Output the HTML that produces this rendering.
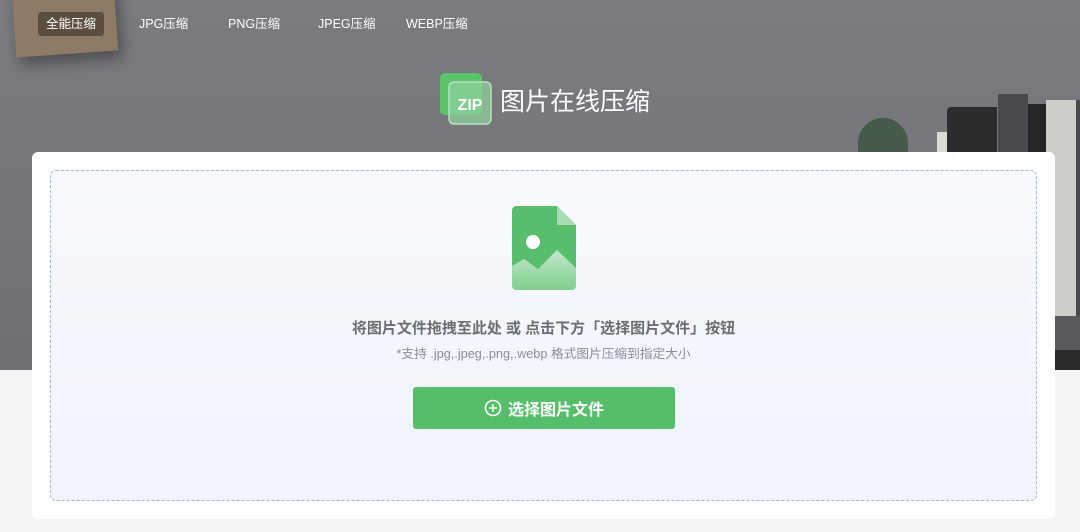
<!DOCTYPE html>
<html><head><meta charset="utf-8"><style>
*{margin:0;padding:0;box-sizing:border-box}
body{width:1080px;height:532px;overflow:hidden;background:#f3f4f6;font-family:"Liberation Sans","Noto Sans CJK SC",sans-serif;position:relative}
.hero{position:absolute;left:0;top:0;width:1080px;height:370px;background:linear-gradient(180deg,#7a7b80 0%,#74757a 60%,#6e6f73 100%);overflow:hidden}
.note{position:absolute;left:14px;top:-14px;width:102px;height:68px;background:#8e7b66;transform:rotate(-4deg);box-shadow:4px 8px 14px rgba(0,0,0,.35)}
.nav{position:absolute;top:12px;left:0;font-size:13px;color:#fff}
.nav span{position:absolute;height:24px;line-height:24px;white-space:nowrap;font-size:12.5px}
.nav span.on{background:rgba(70,60,50,.7);border-radius:3px;padding:0 8px}
.title{position:absolute;left:440px;top:73px;display:flex;align-items:center;color:#fff;font-size:25px}
.card{position:absolute;left:32px;top:152px;width:1023px;height:367px;background:#fff;border-radius:6px}
.drop{position:absolute;left:18px;top:18px;width:987px;height:331px;border:1px dashed #aab4e0;border-radius:6px;background:linear-gradient(180deg,#f8faff,#f1f4fb)}
.t1{position:absolute;top:146px;width:100%;text-align:center;font-size:15px;font-weight:bold;color:#6b6d72}
.t2{position:absolute;top:172px;width:100%;text-align:center;font-size:12.7px;color:#8a8d93}
.btn{position:absolute;left:362px;top:216px;width:262px;height:42px;background:#56bd6b;border-radius:3px;color:#fff;font-size:16px;font-weight:bold;display:flex;align-items:center;justify-content:center}
.b{position:absolute}
</style></head><body>
<div class="hero">
<div class="note"></div>
<div class="nav"><span class="on" style="left:38px">全能压缩</span><span style="left:139px">JPG压缩</span><span style="left:228px">PNG压缩</span><span style="left:318px">JPEG压缩</span><span style="left:406px">WEBP压缩</span></div>
<div class="title">
<svg width="54" height="54" viewBox="0 0 54 54"><rect x="0" y="0" width="42" height="42" rx="5" fill="#5ac46d"/><rect x="9" y="9" width="42" height="42" rx="5" fill="#8fcf9b" fill-opacity=".75" stroke="#b7e2bf" stroke-width="1.5"/><text x="30" y="37" font-family="Liberation Sans" font-weight="bold" font-size="16" fill="#fff" text-anchor="middle">ZIP</text></svg>
<span style="margin-left:6px">图片在线压缩</span></div>
<div class="b" style="left:858px;top:118px;width:50px;height:50px;border-radius:25px 25px 0 0;background:#465a4c"></div>
<div class="b" style="left:937px;top:132px;width:40px;height:40px;background:#dcdad6"></div>
<div class="b" style="left:947px;top:107px;width:50px;height:60px;background:#2c2c2f;border-radius:4px 0 0 0"></div>
<div class="b" style="left:998px;top:94px;width:30px;height:70px;background:#4a4a4e"></div>
<div class="b" style="left:1028px;top:104px;width:18px;height:60px;background:#262629"></div>
<div class="b" style="left:1046px;top:100px;width:34px;height:220px;background:#cfcdca"></div>
<div class="b" style="left:1076px;top:100px;width:4px;height:220px;background:#4a4a4c"></div>
<div class="b" style="left:1055px;top:316px;width:25px;height:54px;background:#5a5a5e"></div>
<div class="b" style="left:1055px;top:350px;width:25px;height:20px;background:#2a2a2c"></div>
</div>
<div class="card"><div class="drop">
<svg style="position:absolute;left:461px;top:35px" width="64" height="84" viewBox="0 0 64 84"><defs><linearGradient id="g" x1="0" y1="0" x2="0" y2="1"><stop offset="0" stop-color="#c3e8cb"/><stop offset="1" stop-color="#7fcf8f"/></linearGradient></defs><path d="M5 0H45L64 19V79Q64 84 59 84H5Q0 84 0 79V5Q0 0 5 0Z" fill="#58bd6c"/><path d="M45 0L64 19H45Z" fill="#a8ddb3"/><circle cx="21" cy="36" r="7" fill="#fff"/><path d="M0 60L12 53L26 63L45 44L64 62V79Q64 84 59 84H5Q0 84 0 79Z" fill="url(#g)"/></svg>
<div class="t1">将图片文件拖拽至此处 或 点击下方「选择图片文件」按钮</div>
<div class="t2">*支持 .jpg,.jpeg,.png,.webp 格式图片压缩到指定大小</div>
<div class="btn"><svg width="18" height="18" viewBox="0 0 18 18" style="margin-right:6px"><circle cx="9" cy="9" r="7.5" fill="none" stroke="#fff" stroke-width="1.5"/><path d="M9 5V13M5 9H13" stroke="#fff" stroke-width="1.5"/></svg>选择图片文件</div>
</div></div>
</body></html>
